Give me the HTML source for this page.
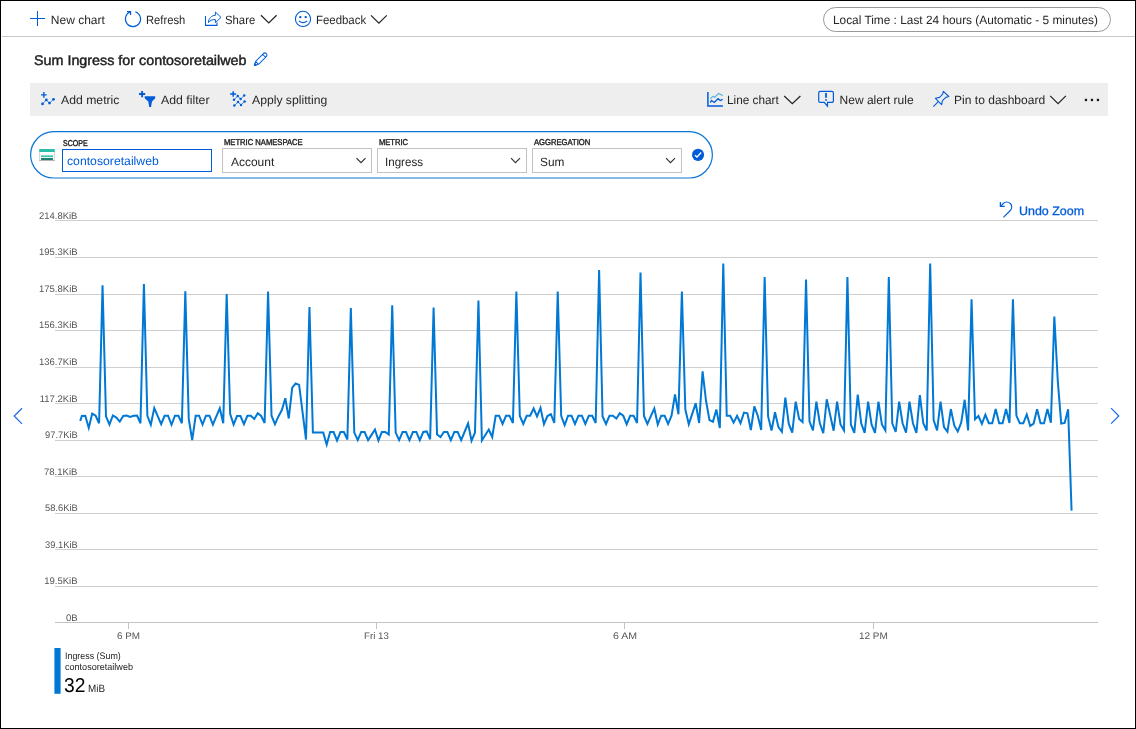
<!DOCTYPE html>
<html><head><meta charset="utf-8"><title>Metrics</title>
<style>
html,body{margin:0;padding:0;background:#fff;}
body{width:1136px;height:729px;position:relative;overflow:hidden;font-family:"Liberation Sans", sans-serif;}
.t{position:absolute;white-space:nowrap;font-family:"Liberation Sans", sans-serif;transform-origin:0 50%;}
.frame{position:absolute;left:0;top:0;width:1134px;height:727px;border:1px solid #000;}
.sep{position:absolute;left:2px;top:36px;width:1133px;height:1px;background:#c8c8c8;}
.bar{position:absolute;left:30px;top:83px;width:1078px;height:33px;background:#eeeeee;}
.timepill{position:absolute;left:823px;top:7px;width:286px;height:23px;border:1px solid #999;border-radius:13px;}
.box{position:absolute;top:148px;height:23px;border:1px solid #c2c2c2;background:#fff;}
.box.sel{top:149px;height:21px;border:1px solid #015cda;}
svg{position:absolute;left:0;top:0;overflow:visible;}
</style></head><body>
<div class="sep"></div>
<div class="timepill"></div>
<div class="bar"></div>
<div class="box sel" style="left:62px;width:148px;"></div>
<div class="box" style="left:222px;width:148px;"></div>
<div class="box" style="left:377px;width:148px;"></div>
<div class="box" style="left:532px;width:148px;"></div>
<svg width="1136" height="729" viewBox="0 0 1136 729">
<rect x="30.6" y="131.7" width="681.8" height="46.3" rx="23.15" fill="none" stroke="#0a75d6" stroke-width="1.2"/>
<rect x="55" y="220" width="1043" height="1" fill="#cfcfcf"/><rect x="55" y="257" width="1043" height="1" fill="#cfcfcf"/><rect x="55" y="294" width="1043" height="1" fill="#cfcfcf"/><rect x="55" y="330" width="1043" height="1" fill="#cfcfcf"/><rect x="55" y="367" width="1043" height="1" fill="#cfcfcf"/><rect x="55" y="403" width="1043" height="1" fill="#cfcfcf"/><rect x="55" y="440" width="1043" height="1" fill="#cfcfcf"/><rect x="55" y="476" width="1043" height="1" fill="#cfcfcf"/><rect x="55" y="513" width="1043" height="1" fill="#cfcfcf"/><rect x="55" y="549" width="1043" height="1" fill="#cfcfcf"/><rect x="55" y="586" width="1043" height="1" fill="#cfcfcf"/><rect x="55" y="622" width="1043" height="1" fill="#c4c4c4"/><rect x="128" y="623" width="1" height="6" fill="#c4c4c4"/><rect x="376" y="623" width="1" height="6" fill="#c4c4c4"/><rect x="624" y="623" width="1" height="6" fill="#c4c4c4"/><rect x="873" y="623" width="1" height="6" fill="#c4c4c4"/>
<path d="M80.20 421.00 L81.85 416.00 L85.30 415.75 L88.75 427.90 L92.20 413.50 L95.64 415.75 L99.09 423.25 L102.54 285.40 L105.99 416.40 L109.44 424.50 L112.89 415.50 L116.33 417.60 L119.78 421.60 L123.23 416.00 L126.68 415.50 L130.13 417.00 L133.58 415.75 L137.03 415.50 L140.47 423.25 L143.92 284.00 L147.37 415.75 L150.82 424.75 L154.27 408.00 L157.72 416.10 L161.17 424.25 L164.61 415.75 L168.06 415.75 L171.51 424.75 L174.96 415.75 L178.41 415.75 L181.86 423.25 L185.31 291.40 L188.75 418.90 L192.20 440.10 L195.65 415.75 L199.10 415.75 L202.55 424.50 L206.00 415.75 L209.44 415.75 L212.89 424.50 L216.34 416.40 L219.79 408.25 L223.24 423.25 L226.69 294.00 L230.14 413.90 L233.58 424.50 L237.03 416.00 L240.48 416.00 L243.93 424.25 L247.38 415.75 L250.83 415.75 L254.28 418.90 L257.72 413.25 L261.17 416.00 L264.62 423.00 L268.07 291.60 L271.52 415.75 L274.97 424.25 L278.41 416.40 L281.86 410.10 L285.31 398.25 L288.76 418.50 L292.21 387.60 L295.66 383.50 L299.11 384.90 L302.55 412.20 L306.00 439.50 L309.45 307.00 L312.90 432.60 L316.35 432.60 L319.80 432.60 L323.25 432.60 L326.69 444.50 L330.14 432.00 L333.59 432.00 L337.04 440.50 L340.49 432.00 L343.94 432.00 L347.38 439.50 L350.83 308.00 L354.28 432.60 L357.73 440.10 L361.18 432.00 L364.63 432.00 L368.08 440.10 L371.52 434.90 L374.97 429.50 L378.42 440.50 L381.87 432.00 L385.32 432.00 L388.77 434.50 L392.22 305.40 L395.66 432.60 L399.11 440.10 L402.56 432.00 L406.01 432.00 L409.46 440.10 L412.91 432.00 L416.35 432.00 L419.80 440.10 L423.25 432.00 L426.70 431.40 L430.15 439.25 L433.60 307.60 L437.05 434.50 L440.49 437.00 L443.94 432.00 L447.39 432.00 L450.84 440.10 L454.29 432.00 L457.74 432.00 L461.19 440.10 L464.63 431.75 L468.08 423.50 L471.53 440.75 L474.98 432.60 L478.43 300.60 L481.88 440.50 L485.32 435.00 L488.77 429.50 L492.22 437.00 L495.67 415.75 L499.12 415.75 L502.57 423.90 L506.02 415.75 L509.46 415.75 L512.91 423.00 L516.36 291.60 L519.81 416.00 L523.26 423.90 L526.71 415.75 L530.15 415.75 L533.60 408.50 L537.05 416.40 L540.50 407.90 L543.95 424.25 L547.40 416.00 L550.85 414.25 L554.29 423.00 L557.74 291.60 L561.19 415.75 L564.64 425.10 L568.09 415.75 L571.54 415.75 L574.99 423.90 L578.43 415.75 L581.88 415.75 L585.33 423.90 L588.78 415.75 L592.23 415.75 L595.68 423.00 L599.12 270.00 L602.57 416.40 L606.02 423.90 L609.47 415.75 L612.92 415.75 L616.37 418.50 L619.82 413.25 L623.26 415.75 L626.71 424.25 L630.16 415.75 L633.61 415.75 L637.06 423.00 L640.51 272.60 L643.96 416.00 L647.40 423.90 L650.85 416.10 L654.30 408.50 L657.75 424.50 L661.20 415.75 L664.65 415.75 L668.10 423.90 L671.54 415.75 L674.99 394.50 L678.44 414.25 L681.89 291.60 L685.34 409.50 L688.79 424.25 L692.23 413.90 L695.68 403.25 L699.13 423.00 L702.58 371.30 L706.03 400.75 L709.48 420.10 L712.93 421.75 L716.37 409.50 L719.82 428.00 L723.27 263.40 L726.72 415.75 L730.17 415.75 L733.62 422.60 L737.07 415.75 L740.51 423.25 L743.96 412.60 L747.41 413.25 L750.86 430.10 L754.31 406.40 L757.76 415.75 L761.20 430.10 L764.65 277.00 L768.10 416.40 L771.55 430.50 L775.00 412.25 L778.45 427.00 L781.90 431.75 L785.34 397.60 L788.79 423.90 L792.24 432.60 L795.69 401.60 L799.14 418.90 L802.59 422.00 L806.04 279.40 L809.48 421.40 L812.93 430.50 L816.38 401.60 L819.83 423.25 L823.28 433.25 L826.73 399.25 L830.17 415.00 L833.62 430.75 L837.07 401.60 L840.52 424.50 L843.97 430.50 L847.42 277.00 L850.87 424.50 L854.31 432.90 L857.76 394.50 L861.21 423.25 L864.66 432.90 L868.11 401.60 L871.56 424.50 L875.00 432.90 L878.45 401.60 L881.90 424.50 L885.35 430.50 L888.80 277.00 L892.25 423.25 L895.70 432.00 L899.14 401.60 L902.59 423.25 L906.04 432.60 L909.49 401.60 L912.94 423.25 L916.39 432.90 L919.84 395.10 L923.28 423.25 L926.73 430.50 L930.18 263.50 L933.63 420.10 L937.08 430.50 L940.53 401.60 L943.98 427.00 L947.42 431.75 L950.87 409.10 L954.32 425.75 L957.77 431.40 L961.22 422.60 L964.67 399.75 L968.11 430.50 L971.56 299.20 L975.01 419.25 L978.46 416.00 L981.91 423.90 L985.36 414.75 L988.81 423.25 L992.25 423.25 L995.70 409.10 L999.15 423.25 L1002.60 423.25 L1006.05 409.10 L1009.50 423.00 L1012.95 299.20 L1016.39 415.60 L1019.84 423.30 L1023.29 423.30 L1026.74 414.50 L1030.19 426.00 L1033.64 423.60 L1037.08 409.30 L1040.53 423.30 L1043.98 423.30 L1047.43 409.00 L1050.88 422.80 L1054.33 316.50 L1057.78 381.00 L1061.22 423.60 L1064.67 423.00 L1068.12 409.30 L1071.57 510.60" fill="none" stroke="#0078d4" stroke-width="2" stroke-linejoin="miter" stroke-miterlimit="4"/>
<g fill="none" stroke="#015cda" stroke-width="1.1" stroke-linecap="butt" stroke-linejoin="miter">
<!-- plus -->
<path d="M30 18.5H45M37.5 11V26" stroke-width="1"/>
<!-- refresh -->
<path d="M135.3 11.75A7.6 7.6 0 1 1 130.4 11.85"/>
<path d="M127 11.6H130.5V15" stroke-width="1.3"/>
<!-- share -->
<path d="M205.5 16V25.4H217V22.4"/>
<path d="M215.4 12L221 17.4L215.4 22.6V19.6C212 19.4 209.8 20.6 208.4 22.6C208.6 18.4 211.4 15.5 215.4 15.3Z" stroke-width="1"/>
<!-- feedback smiley -->
<circle cx="303" cy="18.9" r="7.6"/>
<path d="M299.2 21.3Q303 23.9 306.9 21.3" stroke-linecap="round"/>
<circle cx="300.3" cy="17.1" r="1.2" fill="#015cda" stroke="none"/>
<circle cx="305.7" cy="17.1" r="1.2" fill="#015cda" stroke="none"/>
<!-- pencil -->
<g transform="translate(254.5 65.4) rotate(-45)" stroke-width="1">
<path d="M0 0L3.6 -2.05H14.6A2.05 2.05 0 0 1 14.6 2.05H3.6ZM3.6 -2.05V2.05M13.6 -2.05V2.05"/>
<path d="M0 0L1.6 -0.9V0.9Z" fill="#015cda"/>
</g>
<!-- add metric -->
<path d="M41 94.85H46.7M43.85 92V97.7" stroke-width="1.4"/>
<path d="M42.5 103.9L46.3 99.9L49.5 103.1L53.5 99.3" stroke-width="0.7"/>
<g fill="#015cda" stroke="none"><circle cx="42.5" cy="103.9" r="1.4"/><circle cx="46.3" cy="99.9" r="1.4"/><circle cx="49.5" cy="103.1" r="1.4"/><circle cx="53.5" cy="99.3" r="1.4"/></g>
<!-- add filter -->
<path d="M139 94H145.2M142.1 91V97.3" stroke-width="1.9"/>
<path d="M144.7 96.3H155.2V98.2L152 101.5L151 106.9H149.2L148.3 101.5L144.7 98.2Z" fill="#015cda" stroke="none"/>
<!-- apply splitting -->
<path d="M230.1 94H236.1M233.2 91.2V96.8" stroke-width="1.5"/>
<path d="M234 99.75L237.75 96L240.6 99L244.2 95.5M234.4 105.6L238 101.9L241 104.9L244.6 101.4" stroke-width="0.7"/>
<g fill="#015cda" stroke="none"><circle cx="234" cy="99.75" r="1.25"/><circle cx="237.75" cy="96" r="1.25"/><circle cx="240.6" cy="99" r="1.25"/><circle cx="244.2" cy="95.5" r="1.25"/>
<circle cx="234.4" cy="105.6" r="1.25"/><circle cx="238" cy="101.9" r="1.25"/><circle cx="241" cy="104.9" r="1.25"/><circle cx="244.6" cy="101.4" r="1.25"/></g>
<!-- line chart icon -->
<path d="M707.9 92.1V106H722.9" stroke-width="1.5"/>
<path d="M710.3 98.7L713.1 96.2L714.5 97.4L718.5 93.4L722.8 95.6" stroke="#4fb0d8" stroke-width="1.1"/>
<path d="M710.3 102.6L711.5 100.5L714.3 102.5L718 98.7L720.3 100.5L722.6 99.4" stroke-width="1.3"/>
<!-- alert -->
<path d="M820.2 91.4H831.9A1.5 1.5 0 0 1 833.4 92.9V100.9A1.5 1.5 0 0 1 831.9 102.4H827.5V106.2L824.2 102.4H820.2A1.5 1.5 0 0 1 818.7 100.9V92.9A1.5 1.5 0 0 1 820.2 91.4Z" stroke-width="1.2"/>
<path d="M826 93.1V97.8M826 99.2V100.8" stroke-width="1.8"/>
<!-- pin -->
<path d="M933.35 106.6L938.25 101.7"/>
<path stroke-linejoin="round" d="M935.4 98.3L941.6 104.6L942.5 100.6L945.8 97.4L948.8 96.5L943.4 91.4L942.5 94.4L939.5 97.4Z"/>
<!-- undo -->
<path d="M1000.5 206.3L1003.3 203.5A4.9 4.9 0 0 1 1010.3 210.5L1003.4 217.4"/>
<path d="M1000.4 202.1V206.4H1004.8" stroke-width="1.3"/>
<!-- side arrows -->
<path d="M22 408.3L14.2 416L22 423.8M1111.1 408.2L1118.8 416L1111.1 423.7" stroke="#1f6be0" stroke-width="1.2"/>
</g>
<!-- dark chevrons -->
<g fill="none" stroke="#222" stroke-width="1.2">
<path d="M261 15.3L268.8 23L276.6 15.3"/>
<path d="M371 15.3L378.9 23.2L386.8 15.3"/>
<path d="M784.2 96L792.3 103.7L800.4 96"/>
<path d="M1050.2 95.9L1058.05 103.6L1065.9 95.9"/>
<path d="M356.5 158.1L361 162.7L365.5 158.1M511 158.1L515.5 162.7L520 158.1M666 158.1L670.5 162.7L675 158.1" stroke="#333"/>
</g>
<g fill="#1a1a1a"><rect x="1084.8" y="98.8" width="2.3" height="2.3"/><rect x="1090.8" y="98.8" width="2.3" height="2.3"/><rect x="1096.8" y="98.8" width="2.3" height="2.3"/></g>
<!-- storage icon -->
<rect x="39.6" y="151.5" width="14.8" height="9.1" fill="#fff" stroke="#d4d0d0" stroke-width="0.9"/><rect x="39.2" y="160" width="15.6" height="1" fill="#b9b4b4"/>
<rect x="39.25" y="149" width="15.5" height="3" fill="#2bbfa9"/>
<rect x="41" y="155.4" width="12" height="1.7" fill="#37c2ae"/>
<rect x="41" y="158" width="12" height="2" fill="#1f8071"/>
<!-- check -->
<circle cx="698.05" cy="154.9" r="6.05" fill="#015cda"/>
<path d="M694.9 155.2L697 157L701.2 152.5" fill="none" stroke="#fff" stroke-width="1.3"/>

<rect x="54.4" y="648" width="6.2" height="45.8" fill="#0078d4"/>
</svg>
<div id="txt" style="position:absolute;left:0;top:0;width:1136px;height:729px;will-change:transform;">
<span class="t" style="left:50.82px;top:14px;font-size:12px;line-height:12px;color:#262626;text-rendering:geometricPrecision;">New chart</span>
<span class="t" style="left:145.94px;top:14px;font-size:12px;line-height:12px;color:#262626;transform:scaleX(0.9349);text-rendering:geometricPrecision;">Refresh</span>
<span class="t" style="left:225.24px;top:14px;font-size:12px;line-height:12px;color:#262626;transform:scaleX(0.9447);text-rendering:geometricPrecision;">Share</span>
<span class="t" style="left:316.22px;top:14px;font-size:12px;line-height:12px;color:#262626;transform:scaleX(0.9509);text-rendering:geometricPrecision;">Feedback</span>
<span class="t" style="left:833.40px;top:14px;font-size:12px;line-height:12px;color:#262626;transform:scaleX(0.9879);text-rendering:geometricPrecision;">Local Time : Last 24 hours (Automatic - 5 minutes)</span>
<span class="t" style="left:34.32px;top:53px;font-size:14px;line-height:14px;color:#222;transform:scaleX(1.0228);text-rendering:geometricPrecision;-webkit-text-stroke:0.45px #222;">Sum Ingress for contosoretailweb</span>
<span class="t" style="left:61.08px;top:94px;font-size:12px;line-height:12px;color:#262626;transform:scaleX(1.0188);text-rendering:geometricPrecision;">Add metric</span>
<span class="t" style="left:161.28px;top:94px;font-size:12px;line-height:12px;color:#262626;transform:scaleX(1.0240);text-rendering:geometricPrecision;">Add filter</span>
<span class="t" style="left:251.60px;top:94px;font-size:12px;line-height:12px;color:#262626;transform:scaleX(1.0156);text-rendering:geometricPrecision;">Apply splitting</span>
<span class="t" style="left:726.96px;top:94px;font-size:12px;line-height:12px;color:#262626;transform:scaleX(0.9805);text-rendering:geometricPrecision;">Line chart</span>
<span class="t" style="left:839.58px;top:94px;font-size:12px;line-height:12px;color:#262626;text-rendering:geometricPrecision;">New alert rule</span>
<span class="t" style="left:953.58px;top:94px;font-size:12px;line-height:12px;color:#262626;transform:scaleX(1.0049);text-rendering:geometricPrecision;">Pin to dashboard</span>
<span class="t" style="left:62.78px;top:139px;font-size:8.5px;line-height:8.5px;color:#222;transform:scaleX(0.8301);text-rendering:geometricPrecision;-webkit-text-stroke:0.4px #222;">SCOPE</span>
<span class="t" style="left:223.80px;top:138px;font-size:8.5px;line-height:8.5px;color:#222;transform:scaleX(0.8964);text-rendering:geometricPrecision;-webkit-text-stroke:0.4px #222;">METRIC NAMESPACE</span>
<span class="t" style="left:378.80px;top:138px;font-size:8.5px;line-height:8.5px;color:#222;transform:scaleX(0.8897);text-rendering:geometricPrecision;-webkit-text-stroke:0.4px #222;">METRIC</span>
<span class="t" style="left:533.80px;top:138px;font-size:8.5px;line-height:8.5px;color:#222;transform:scaleX(0.8972);text-rendering:geometricPrecision;-webkit-text-stroke:0.4px #222;">AGGREGATION</span>
<span class="t" style="left:66.58px;top:155px;font-size:12px;line-height:12px;color:#015cda;transform:scaleX(1.0190);text-rendering:geometricPrecision;">contosoretailweb</span>
<span class="t" style="left:230.90px;top:156px;font-size:12px;line-height:12px;color:#262626;text-rendering:geometricPrecision;">Account</span>
<span class="t" style="left:385.17px;top:156px;font-size:12px;line-height:12px;color:#262626;transform:scaleX(0.9653);text-rendering:geometricPrecision;">Ingress</span>
<span class="t" style="left:539.55px;top:156px;font-size:12px;line-height:12px;color:#262626;transform:scaleX(0.9877);text-rendering:geometricPrecision;">Sum</span>
<span class="t" style="left:1019.17px;top:205px;font-size:12.3px;line-height:12.3px;color:#015cda;transform:scaleX(1.0131);text-rendering:geometricPrecision;-webkit-text-stroke:0.3px #015cda;">Undo Zoom</span>
<span class="t" style="left:39.17px;top:212px;font-size:9.5px;line-height:9.5px;color:#555;transform:scaleX(0.9949);text-rendering:geometricPrecision;">214.8KiB</span>
<span class="t" style="left:39.02px;top:248px;font-size:9.5px;line-height:9.5px;color:#555;text-rendering:geometricPrecision;">195.3KiB</span>
<span class="t" style="left:39.02px;top:285px;font-size:9.5px;line-height:9.5px;color:#555;text-rendering:geometricPrecision;">175.8KiB</span>
<span class="t" style="left:39.02px;top:321px;font-size:9.5px;line-height:9.5px;color:#555;text-rendering:geometricPrecision;">156.3KiB</span>
<span class="t" style="left:39.02px;top:358px;font-size:9.5px;line-height:9.5px;color:#555;text-rendering:geometricPrecision;">136.7KiB</span>
<span class="t" style="left:39.75px;top:395px;font-size:9.5px;line-height:9.5px;color:#555;text-rendering:geometricPrecision;">117.2KiB</span>
<span class="t" style="left:44.65px;top:431px;font-size:9.5px;line-height:9.5px;color:#555;transform:scaleX(0.9819);text-rendering:geometricPrecision;">97.7KiB</span>
<span class="t" style="left:44.09px;top:468px;font-size:9.5px;line-height:9.5px;color:#555;transform:scaleX(1.0040);text-rendering:geometricPrecision;">78.1KiB</span>
<span class="t" style="left:44.51px;top:504px;font-size:9.5px;line-height:9.5px;color:#555;transform:scaleX(0.9863);text-rendering:geometricPrecision;">58.6KiB</span>
<span class="t" style="left:44.50px;top:541px;font-size:9.5px;line-height:9.5px;color:#555;transform:scaleX(0.9866);text-rendering:geometricPrecision;">39.1KiB</span>
<span class="t" style="left:44.28px;top:577px;font-size:9.5px;line-height:9.5px;color:#555;text-rendering:geometricPrecision;">19.5KiB</span>
<span class="t" style="left:65.76px;top:614px;font-size:9.5px;line-height:9.5px;color:#555;transform:scaleX(1.0071);text-rendering:geometricPrecision;">0B</span>
<span class="t" style="left:117.00px;top:632px;font-size:9.5px;line-height:9.5px;color:#555;transform:scaleX(1.0380);text-rendering:geometricPrecision;">6 PM</span>
<span class="t" style="left:364.45px;top:632px;font-size:9.5px;line-height:9.5px;color:#555;transform:scaleX(1.0235);text-rendering:geometricPrecision;">Fri 13</span>
<span class="t" style="left:612.83px;top:632px;font-size:9.5px;line-height:9.5px;color:#555;transform:scaleX(1.1122);text-rendering:geometricPrecision;">6 AM</span>
<span class="t" style="left:858.61px;top:632px;font-size:9.5px;line-height:9.5px;color:#555;transform:scaleX(1.0488);text-rendering:geometricPrecision;">12 PM</span>
<span class="t" style="left:64.83px;top:652px;font-size:9.5px;line-height:9.5px;color:#1c1c1c;transform:scaleX(0.9358);text-rendering:geometricPrecision;">Ingress (Sum)</span>
<span class="t" style="left:64.96px;top:663px;font-size:9.5px;line-height:9.5px;color:#1c1c1c;transform:scaleX(0.9537);text-rendering:geometricPrecision;">contosoretailweb</span>
<span class="t" style="left:64.24px;top:676px;font-size:20px;line-height:20px;color:#000;transform:scaleX(0.9618);text-rendering:geometricPrecision;">32</span>
<span class="t" style="left:88.27px;top:684px;font-size:10.5px;line-height:10.5px;color:#1c1c1c;transform:scaleX(0.9399);text-rendering:geometricPrecision;">MiB</span>
</div>
<div class="frame"></div>
</body></html>
